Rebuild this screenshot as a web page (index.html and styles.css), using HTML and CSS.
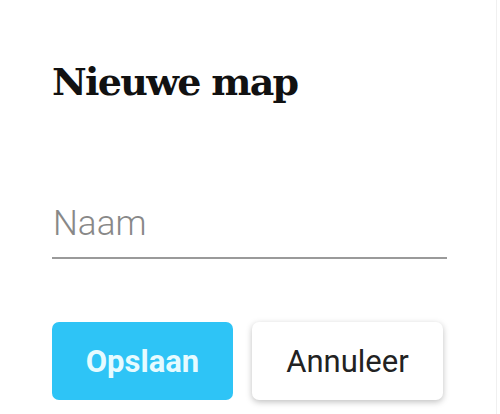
FILE: index.html
```html
<!DOCTYPE html>
<html lang="nl">
<head>
    <meta charset="UTF-8">
    <meta name="viewport" content="width=device-width, initial-scale=1.0">
    <title>Nieuwe map</title>
    <link rel="stylesheet" href="styles.css">
</head>
<body>
    <div class="dialog">
        <h1 class="dialog-title">Nieuwe map</h1>

        <div class="field">
            <input class="field-input" type="text" placeholder="Naam">
        </div>

        <div class="dialog-actions">
            <button class="btn btn-primary">Opslaan</button>
            <button class="btn btn-secondary">Annuleer</button>
        </div>
    </div>
</body>
</html>
```

FILE: styles.css
```css
* {
    margin: 0;
    padding: 0;
    box-sizing: border-box;
}

body {
    font-family: Roboto, 'Noto Sans', sans-serif;
    background: #ffffff;
    width: 500px;
    height: 414px;
    overflow: hidden;
}

.dialog {
    width: 497px;
    height: 414px;
    border-right: 1px solid #f0f0f0;
    padding: 60px 52px 0 52px;
}

.dialog-title {
    font-family: 'DejaVu Serif', 'Liberation Serif', serif;
    font-weight: bold;
    font-size: 38px;
    letter-spacing: -1.7px;
    color: #111111;
    line-height: 44px;
}

.field {
    margin-top: 99px;
    width: 395px;
}

.field-input {
    display: block;
    width: 100%;
    border: none;
    border-bottom: 2px solid #9a9a9a;
    font-family: Roboto, sans-serif;
    font-size: 35px;
    font-weight: 300;
    line-height: 41px;
    height: 56px;
    color: #333;
    padding: 0 0 13px 1px;
    outline: none;
    background: transparent;
}

.field-input::placeholder {
    color: #888888;
}

.dialog-actions {
    display: flex;
    gap: 19px;
    margin-top: 63px;
}

.btn {
    height: 78px;
    border: none;
    border-radius: 7px;
    font-family: Roboto, sans-serif;
    font-size: 31px;
    cursor: pointer;
}

.btn-primary {
    width: 181px;
    background: #2ec4f6;
    color: #e6fbff;
    font-weight: bold;
}

.btn-secondary {
    width: 191px;
    background: #ffffff;
    color: #222222;
    box-shadow: 0 2px 6px rgba(0, 0, 0, 0.25);
}
```
